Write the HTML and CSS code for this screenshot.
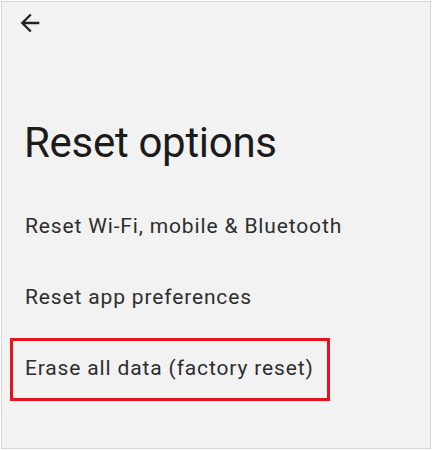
FILE: index.html
```html
<!DOCTYPE html>
<html lang="en">
<head>
<meta charset="utf-8">
<link rel="stylesheet" href="styles.css">
<title>Reset options</title>
</head>
<body>
<div class="frame">
  <div class="topbar">
    <svg class="back" viewBox="0 0 24 24" width="28" height="28" aria-hidden="true">
      <path d="M20 11H7.83l5.59-5.59L12 4l-8 8 8 8 1.41-1.41L7.83 13H20v-2z" fill="#222"/>
    </svg>
  </div>
  <h1 class="title">Reset options</h1>
  <ul class="list">
    <li class="item">Reset Wi-Fi, mobile &amp; Bluetooth</li>
    <li class="item">Reset app preferences</li>
    <li class="item item-hl">Erase all data (factory reset)</li>
  </ul>
</div>
</body>
</html>
```

FILE: styles.css
```css
* { box-sizing: border-box; }
html, body { margin: 0; padding: 0; background: #ffffff; }
body { font-family: Roboto, "Noto Sans", Arial, sans-serif; }
.frame {
  margin: 1px;
  height: 448px;
  border: 1px solid #d6d6d6;
  background: #f2f2f2;
  padding-left: 8px;
}
.topbar {
  height: 36px;
  padding: 7px 0 0 6px;
}
.back { display: block; }
.title {
  margin: 80px 0 0 14px;
  font-size: 42px;
  line-height: 50px;
  font-weight: 400;
  color: #1b1b1b;
  letter-spacing: -0.3px;
}
.list {
  list-style: none;
  margin: 28px 0 0 0;
  padding: 0;
  display: flex;
  flex-direction: column;
  gap: 8px;
}
.item {
  height: 63px;
  border: 3px solid transparent;
  padding: 0 12px;
  font-size: 21px;
  line-height: 54px;
  letter-spacing: 0.85px;
  color: #2e2e2e;
}
.item-hl {
  width: 320px;
  border-color: #e3141f;
}
```
